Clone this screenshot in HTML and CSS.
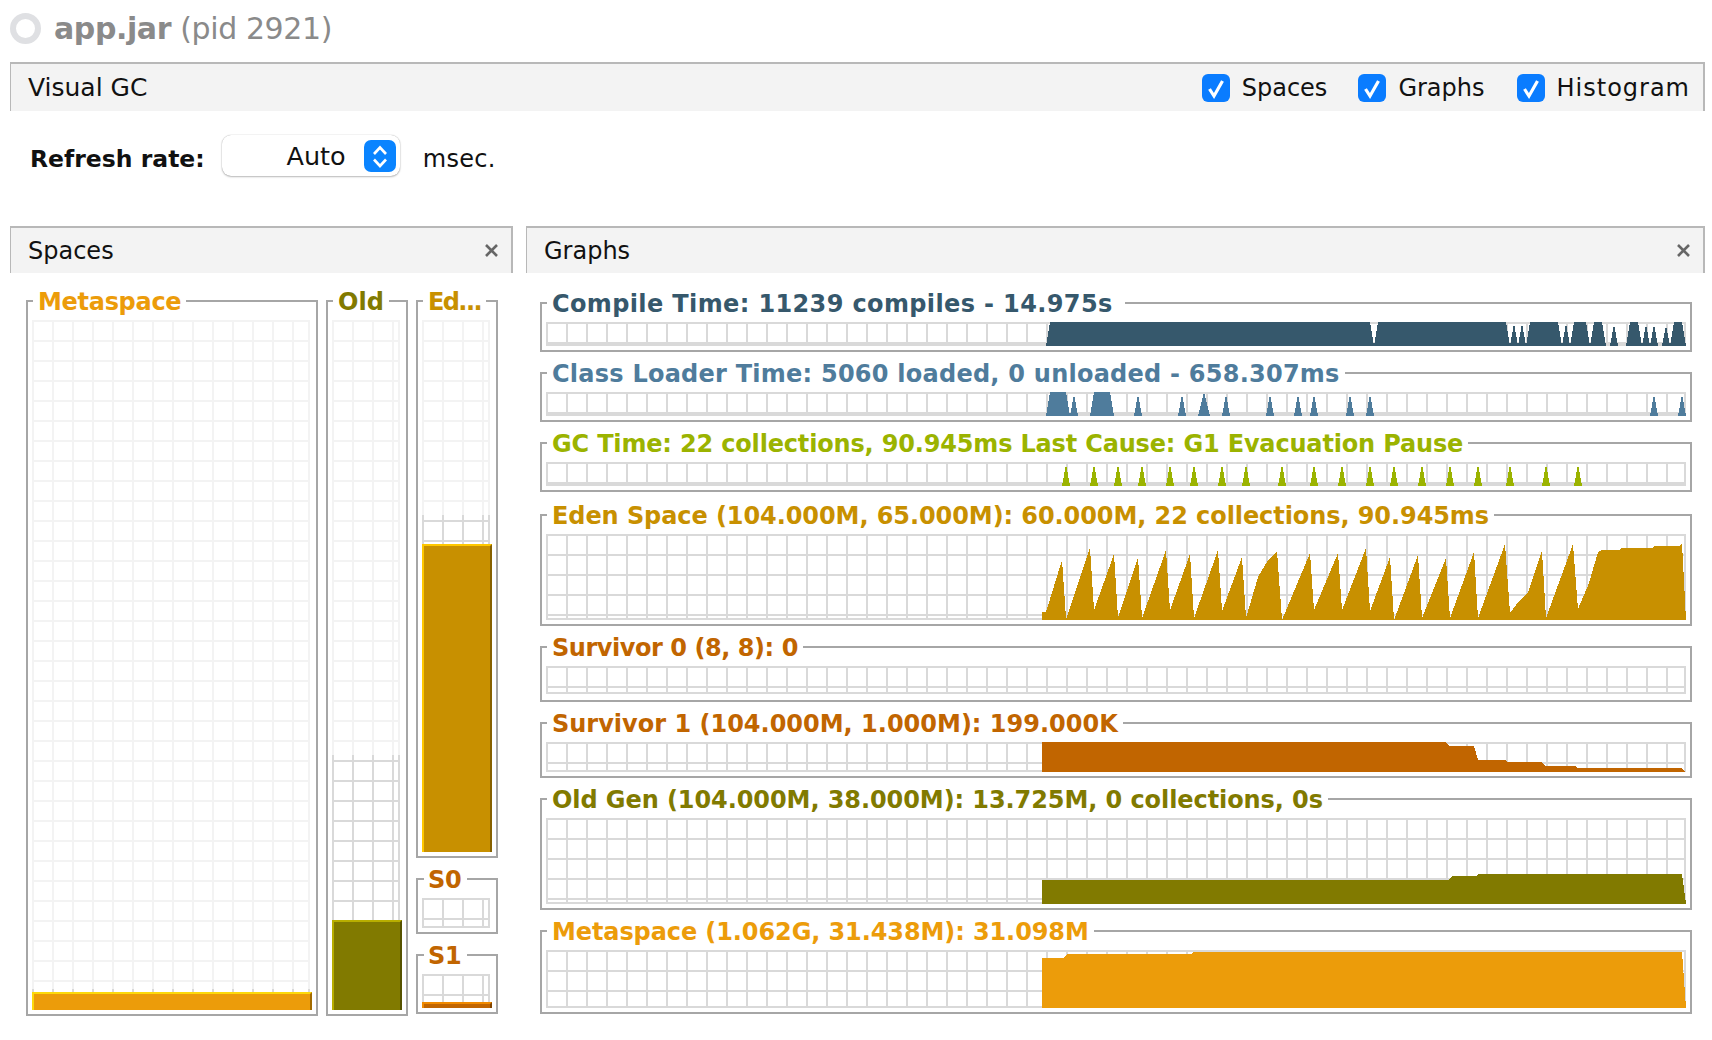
FILE: index.html
```html
<!DOCTYPE html>
<html lang="en">
<head>
<meta charset="utf-8">
<title>Visual GC</title>
<link rel="stylesheet" href="styles.css">
</head>
<body>
<div class="app">
  <div class="title-row">
    <span class="spinner"></span>
    <h1 class="title"><b>app.jar</b> (pid 2921)</h1>
  </div>

  <div class="tab main-tab">
    <span class="tab-name">Visual GC</span>
    <div class="checks">
      <label class="check"><svg class="check-box" viewBox="0 0 28 28"><rect width="28" height="28" rx="6" class="check-bg"/><path d="M7.5 15l4.5 7L20.5 7" class="check-mark"/></svg><span>Spaces</span></label>
      <label class="check check-graphs"><svg class="check-box" viewBox="0 0 28 28"><rect width="28" height="28" rx="6" class="check-bg"/><path d="M7.5 15l4.5 7L20.5 7" class="check-mark"/></svg><span>Graphs</span></label>
      <label class="check"><svg class="check-box" viewBox="0 0 28 28"><rect width="28" height="28" rx="6" class="check-bg"/><path d="M7.5 15l4.5 7L20.5 7" class="check-mark"/></svg><span class="c-hist">Histogram</span></label>
    </div>
  </div>

  <div class="refresh">
    <span class="refresh-label">Refresh rate:</span>
    <div class="combo">
      <span class="combo-value">Auto</span>
      <svg class="stepper" viewBox="0 0 32 32"><rect width="32" height="32" rx="7" class="stepper-bg"/><path d="M10 14l6-6.5 6 6.5M10 19.500l6 6.500 6-6.500" class="stepper-mark"/></svg>
    </div>
    <span class="unit">msec.</span>
  </div>

  <div class="columns">
    <section class="col-spaces">
      <div class="tab sub-tab">
        <span class="tab-name">Spaces</span>
        <svg class="close" viewBox="0 0 13 13"><path d="M1 1l11 11M12 1L1 12"/></svg>
      </div>
      <div class="space-row">
        <div class="box box-meta">
          <span class="legend t-meta ls-meta">Metaspace</span>
          <div class="gauge">
            <div class="lines faint"></div>
            <div class="lines" style="clip-path: inset(669px 0 0 0)"></div>
            <div class="bar bar-meta" style="height: 18px"></div>
          </div>
        </div>
        <div class="box box-narrow">
          <span class="legend t-old">Old</span>
          <div class="gauge">
            <div class="lines faint"></div>
            <div class="lines" style="clip-path: inset(435px 0 0 0)"></div>
            <div class="bar bar-old" style="height: 90px"></div>
          </div>
        </div>
        <div class="space-stack">
          <div class="box box-eden">
            <span class="legend t-eden ed">Ed...</span>
            <div class="gauge">
              <div class="lines faint"></div>
              <div class="lines" style="clip-path: inset(195px 0 0 0)"></div>
              <div class="bar bar-eden" style="height: 308px"></div>
            </div>
          </div>
          <div class="box box-s0">
            <span class="legend t-surv small">S0</span>
            <div class="gauge"><div class="lines"></div></div>
          </div>
          <div class="box box-s1">
            <span class="legend t-surv small">S1</span>
            <div class="gauge">
              <div class="lines"></div>
              <div class="bar bar-s1" style="height: 6px"></div>
            </div>
          </div>
        </div>
      </div>
    </section>

    <section class="col-graphs">
      <div class="tab sub-tab">
        <span class="tab-name">Graphs</span>
        <svg class="close" viewBox="0 0 13 13"><path d="M1 1l11 11M12 1L1 12"/></svg>
      </div>
      <div class="graph-list">
        <div class="panel">
          <span class="legend g-legend t-compile wide">Compile Time: 11239 compiles - 14.975s</span>
          <div class="chart h24">
            <svg viewBox="546 322 1140 24" preserveAspectRatio="none"><polygon class="f-compile" points="1046,346 1050,322 1370,322 1374,346 1378,322 1506,322 1510,346 1514,323 1518,346 1522,323 1526,346 1530,322 1558,322 1562,346 1566,323 1570,346 1574,322 1586,322 1590,346 1594,322 1602,322 1606,346 1610,346 1614,324 1618,346 1626,346 1630,322 1638,322 1642,346 1646,324 1650,346 1654,324 1658,346 1662,346 1666,325 1670,346 1674,322 1682,322 1686,346"/></svg>
          </div>
        </div>
        <div class="panel">
          <span class="legend g-legend t-class ls-class">Class Loader Time: 5060 loaded, 0 unloaded - 658.307ms</span>
          <div class="chart h24">
            <svg viewBox="546 392 1140 24" preserveAspectRatio="none"><path class="f-class" d="M1046 416L1050 392H1066L1070 416ZM1070 416L1074 394L1078 416ZM1090 416L1094 392H1110L1114 416ZM1134 416L1138 394L1142 416ZM1178 416L1182 394L1186 416ZM1198 416L1204 392L1210 416ZM1222 416L1226 394L1230 416ZM1266 416L1270 394L1274 416ZM1294 416L1298 394L1302 416ZM1310 416L1314 394L1318 416ZM1346 416L1350 394L1354 416ZM1366 416L1370 394L1374 416ZM1650 416L1654 394L1658 416ZM1678 416L1682 394L1686 416Z"/></svg>
          </div>
        </div>
        <div class="panel">
          <span class="legend g-legend t-gc ls-gc">GC Time: 22 collections, 90.945ms Last Cause: G1 Evacuation Pause</span>
          <div class="chart h24">
            <svg viewBox="546 462 1140 24" preserveAspectRatio="none"><path class="f-gc" d="M1062 486L1066 464L1070 486ZM1090 486L1094 464L1098 486ZM1114 486L1118 464L1122 486ZM1138 486L1142 464L1146 486ZM1166 486L1170 464L1174 486ZM1190 486L1194 464L1198 486ZM1218 486L1222 464L1226 486ZM1242 486L1246 464L1250 486ZM1278 486L1282 464L1286 486ZM1310 486L1314 464L1318 486ZM1338 486L1342 464L1346 486ZM1366 486L1370 464L1374 486ZM1390 486L1394 464L1398 486ZM1418 486L1422 464L1426 486ZM1446 486L1450 464L1454 486ZM1474 486L1478 464L1482 486ZM1506 486L1510 464L1514 486ZM1542 486L1546 464L1550 486ZM1574 486L1578 464L1582 486Z"/></svg>
          </div>
        </div>
        <div class="panel">
          <span class="legend g-legend t-eden ls-eden">Eden Space (104.000M, 65.000M): 60.000M, 22 collections, 90.945ms</span>
          <div class="chart h86">
            <svg viewBox="546 534 1140 86" preserveAspectRatio="none"><polygon class="f-eden" points="1042,620 1042,612 1046,612 1062,560 1066,618 1066,620 1090,548 1094,610 1114,554 1118,618 1138,557 1142,618 1166,550 1170,610 1190,554 1194,618 1218,550 1222,611 1242,557 1246,618 1258,577 1268,560 1277,551 1282,620 1310,553 1314,610 1338,553 1342,610 1366,548 1370,611 1390,557 1394,620 1418,555 1422,618 1446,558 1450,618 1474,552 1478,618 1505,544 1510,613 1516,605 1528,592 1542,551 1546,618 1573,544 1578,609 1589,583 1598,552 1602,550 1620,550 1621,548 1653,548 1654,546 1680,546 1682,543 1686,620"/></svg>
          </div>
        </div>
        <div class="panel panel-s0">
          <span class="legend g-legend t-surv ls-s0">Survivor 0 (8, 8): 0</span>
          <div class="chart h28"></div>
        </div>
        <div class="panel">
          <span class="legend g-legend t-surv">Survivor 1 (104.000M, 1.000M): 199.000K</span>
          <div class="chart h30">
            <svg viewBox="546 742 1140 30" preserveAspectRatio="none"><polygon class="f-surv" points="1042,772 1042,742 1446,742 1449,746 1474,746 1478,760 1505,760 1508,762 1542,762 1545,766 1575,766 1578,768 1681,768 1686,772"/></svg>
          </div>
        </div>
        <div class="panel">
          <span class="legend g-legend t-old ls-eden">Old Gen (104.000M, 38.000M): 13.725M, 0 collections, 0s</span>
          <div class="chart h86">
            <svg viewBox="546 818 1140 86" preserveAspectRatio="none"><polygon class="f-old" points="1042,904 1042,880 1448,880 1452,876 1476,876 1479,874 1682,874 1686,904"/></svg>
          </div>
        </div>
        <div class="panel">
          <span class="legend g-legend t-meta ls-mgraph">Metaspace (1.062G, 31.438M): 31.098M</span>
          <div class="chart h58">
            <svg viewBox="546 950 1140 58" preserveAspectRatio="none"><polygon class="f-meta" points="1042,1008 1042,958 1063,958 1067,954 1191,954 1194,952 1682,952 1686,1008"/></svg>
          </div>
        </div>
      </div>
    </section>
  </div>
</div>
</body>
</html>
```

FILE: styles.css
```css
* { box-sizing: border-box; }
html, body { margin: 0; background: #fff; }
body {
  width: 1712px;
  height: 1040px;
  overflow: hidden;
  font-family: "DejaVu Sans", sans-serif;
  font-size: 24px;
  color: #111;
}
.app { padding: 0 7px 0 10px; }

.title-row { height: 62px; display: flex; align-items: center; gap: 13px; padding-bottom: 6px; }
.spinner { width: 31px; height: 31px; border-radius: 50%; border: 6px solid #dfe0e3; }
.title { margin: 2px 0 0; font-size: 30px; font-weight: 400; color: #8a8a8a; letter-spacing: -0.4px; line-height: 36px; }
.title b { font-weight: 700; }

.tab {
  display: flex;
  align-items: center;
  justify-content: space-between;
  background: #f3f3f3;
  border-top: 2px solid #b8b8b8;
  border-left: 1px solid #b8b8b8;
  border-right: 2px solid #b8b8b8;
  padding-left: 17px;
}
.main-tab { height: 49px; padding-right: 13px; }
.main-tab .tab-name { font-size: 25px; }
.sub-tab { height: 47px; padding-right: 13px; }
.tab-name { line-height: 30px; }

.checks { display: flex; align-items: center; }
.check { display: flex; align-items: center; gap: 12px; margin-left: 32px; }
.check-graphs { margin-left: 31px; }
.check-box { width: 28px; height: 28px; display: block; }
.check-bg { fill: #0a7cff; }
.check-mark { fill: none; stroke: #fff; stroke-width: 3.2; }
.c-hist { letter-spacing: 1px; }

.refresh { height: 115px; padding: 24px 0 50px 20px; display: flex; align-items: center; }
.refresh-label { font-weight: 700; font-size: 23.500px; margin-top: 6px; }
.combo {
  width: 178px;
  height: 41px;
  margin: 0 23px 0 17px;
  padding-right: 4px;
  display: flex;
  align-items: center;
  justify-content: flex-end;
  gap: 18px;
  background: #fff;
  border-radius: 9px;
  box-shadow: 0 0 1px rgba(0,0,0,.35), 0 1px 2px rgba(0,0,0,.25);
}
.combo-value { font-size: 25.500px; margin-top: 1px; }
.unit { margin-top: 6px; letter-spacing: 0.3px; }
.stepper { width: 32px; height: 32px; display: block; }
.stepper-bg { fill: #0a84ff; }
.stepper-mark { fill: none; stroke: #fff; stroke-width: 2.6; }

.columns { display: flex; gap: 13px; }
.col-spaces { width: 503px; }
.col-graphs { width: 1179px; }
.close { width: 13px; height: 13px; display: block; }
.close path { fill: none; stroke: #666; stroke-width: 2.6; }

.space-row { display: flex; gap: 8px; height: 716px; margin-top: 27px; padding-left: 16px; }
.box {
  position: relative;
  display: flex;
  flex-direction: column;
  border: 2px solid #a6a6a6;
  padding: 18px 4px 4px;
}
.box-meta { width: 292px; }
.box-narrow { width: 82px; }
.space-stack { width: 82px; height: 714px; display: flex; flex-direction: column; gap: 20px; }
.box-eden { flex: 1; }
.box-s0 { height: 56px; }
.box-s1 { height: 60px; }
.gauge { position: relative; flex: 1; }
.lines {
  position: absolute;
  inset: 0 2px 0 0;
  background-image:
    linear-gradient(to right, #d9d9d9 2px, transparent 2px),
    linear-gradient(to bottom, #d9d9d9 2px, transparent 2px);
  background-size: 20px 20px;
  border-right: 2px solid #d9d9d9;
  border-bottom: 2px solid #d9d9d9;
}
.lines.faint {
  background-image:
    linear-gradient(to right, #f3f3f3 2px, transparent 2px),
    linear-gradient(to bottom, #f3f3f3 2px, transparent 2px);
  border-color: #f3f3f3;
}
.bar {
  position: absolute;
  left: 0;
  right: 0;
  bottom: 0;
  border-style: solid;
  border-width: 2px 2px 0 2px;
}
.bar-meta { background: #ec9c0a; border-color: #fdd90b #a36b00 #ec9c0a #fdd90b; }
.bar-old { background: #817a00; border-color: #b8ae00 #565200 #817a00 #b8ae00; }
.bar-eden { background: #c89000; border-color: #ffc800 #876100 #c89000 #ffc800; }
.bar-s1 { background: #c16500; border-color: #f08a00 #824400 #c16500 #f08a00; }

.legend {
  position: absolute;
  left: 5px;
  top: -14px;
  padding: 0 5px;
  background: #fff;
  font-size: 24px;
  font-weight: 700;
  line-height: 28px;
  white-space: nowrap;
}
.legend.small { left: 6px; padding: 0 6px 0 4px; letter-spacing: -0.4px; }
.legend.ed { letter-spacing: -1.6px; }
.t-meta { color: #ec9c0a; }
.t-old { color: #817a00; }
.t-eden { color: #c89000; }
.t-surv { color: #c16500; }
.t-compile { color: #36586c; }
.t-class { color: #4f7c9c; }
.t-gc { color: #9bb300; }
.ls-meta { letter-spacing: -0.3px; }
.ls-class { letter-spacing: 0.24px; }
.ls-gc { letter-spacing: -0.17px; }
.ls-eden { letter-spacing: -0.08px; }
.ls-s0 { letter-spacing: -0.45px; }
.ls-mgraph { letter-spacing: -0.1px; }

.graph-list { display: flex; flex-direction: column; gap: 20px; padding: 29px 13px 0 14px; }
.panel {
  position: relative;
  border: 2px solid #a6a6a6;
  padding: 18px 4px 4px;
}
.panel-s0 { padding-bottom: 6px; }
.panel:nth-child(4) { margin-top: 2px; }
.g-legend.wide { padding-right: 12px; letter-spacing: 0.37px; }
.chart {
  position: relative;
  background-image:
    linear-gradient(to right, #d9d9d9 2px, transparent 2px),
    linear-gradient(to bottom, #d9d9d9 2px, transparent 2px);
  background-size: 20px 20px;
  border-right: 2px solid #d9d9d9;
  border-bottom: 2px solid #d9d9d9;
}
.chart svg { position: absolute; left: 0; top: 0; width: 1140px; height: calc(100% + 2px); display: block; shape-rendering: crispEdges; }
.h24 { height: 24px; }
.h28 { height: 28px; }
.h30 { height: 30px; }
.h58 { height: 58px; }
.h86 { height: 86px; }
.f-compile { fill: #36586c; }
.f-class { fill: #4f7c9c; }
.f-gc { fill: #9bb300; }
.f-eden { fill: #c89000; }
.f-surv { fill: #c16500; }
.f-old { fill: #817a00; }
.f-meta { fill: #ec9c0a; }
```
